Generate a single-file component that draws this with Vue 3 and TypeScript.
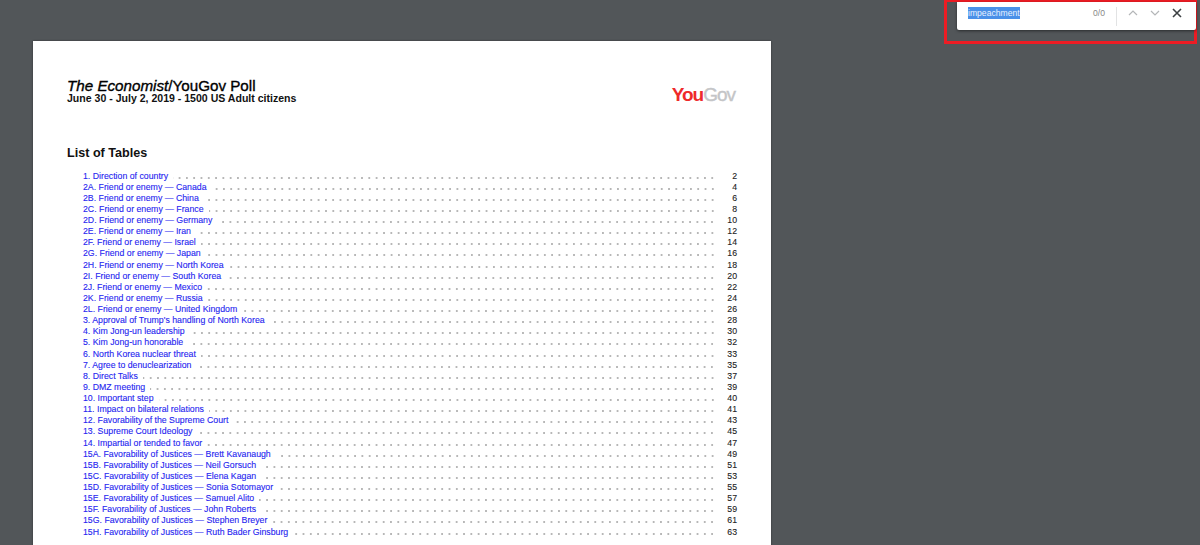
<script setup lang="ts">
const rows: [string, number][] = [
  ['1. Direction of country', 2],
  ['2A. Friend or enemy — Canada', 4],
  ['2B. Friend or enemy — China', 6],
  ['2C. Friend or enemy — France', 8],
  ['2D. Friend or enemy — Germany', 10],
  ['2E. Friend or enemy — Iran', 12],
  ['2F. Friend or enemy — Israel', 14],
  ['2G. Friend or enemy — Japan', 16],
  ['2H. Friend or enemy — North Korea', 18],
  ['2I. Friend or enemy — South Korea', 20],
  ['2J. Friend or enemy — Mexico', 22],
  ['2K. Friend or enemy — Russia', 24],
  ['2L. Friend or enemy — United Kingdom', 26],
  ["3. Approval of Trump's handling of North Korea", 28],
  ['4. Kim Jong-un leadership', 30],
  ['5. Kim Jong-un honorable', 32],
  ['6. North Korea nuclear threat', 33],
  ['7. Agree to denuclearization', 35],
  ['8. Direct Talks', 37],
  ['9. DMZ meeting', 39],
  ['10. Important step', 40],
  ['11. Impact on bilateral relations', 41],
  ['12. Favorability of the Supreme Court', 43],
  ['13. Supreme Court Ideology', 45],
  ['14. Impartial or tended to favor', 47],
  ['15A. Favorability of Justices — Brett Kavanaugh', 49],
  ['15B. Favorability of Justices — Neil Gorsuch', 51],
  ['15C. Favorability of Justices — Elena Kagan', 53],
  ['15D. Favorability of Justices — Sonia Sotomayor', 55],
  ['15E. Favorability of Justices — Samuel Alito', 57],
  ['15F. Favorability of Justices — John Roberts', 59],
  ['15G. Favorability of Justices — Stephen Breyer', 61],
  ['15H. Favorability of Justices — Ruth Bader Ginsburg', 63],
]
</script>

<template>
  <div class="viewer">
    <div class="page">
      <header class="head">
        <div>
          <h1 class="title"><i>The Economist</i>/YouGov Poll</h1>
          <p class="sub">June 30 - July 2, 2019 - 1500 US Adult citizens</p>
        </div>
        <div class="logo"><span class="you">You</span><span class="gov">Gov</span></div>
      </header>
      <h2 class="list-title">List of Tables</h2>
      <ul class="toc">
        <li v-for="r in rows" :key="r[0]" class="row">
          <span class="label">{{ r[0] }}</span>
          <span class="dots"></span>
          <span class="num">{{ r[1] }}</span>
        </li>
      </ul>
    </div>
    <div class="find-wrap">
      <div class="find">
        <span class="query"><span class="sel">impeachment</span></span>
        <span class="count">0/0</span>
        <span class="sep"></span>
        <svg class="ic" viewBox="0 0 12 12" width="12" height="12"><path d="M2 8l4-4 4 4" fill="none" stroke="#b4b6b8" stroke-width="1.2"/></svg>
        <svg class="ic" viewBox="0 0 12 12" width="12" height="12"><path d="M2 4l4 4 4-4" fill="none" stroke="#b4b6b8" stroke-width="1.2"/></svg>
        <svg class="ic close" viewBox="0 0 12 12" width="12" height="12"><path d="M2 2l8 8M10 2l-8 8" fill="none" stroke="#3c4043" stroke-width="1.6"/></svg>
      </div>
    </div>
  </div>
</template>

<style>
html, body { margin: 0; overflow: hidden; }
</style>

<style scoped>
.viewer {
  position: relative;
  height: 545px;
  overflow: hidden;
  background: #525659;
  font-family: "Liberation Sans", Arial, sans-serif;
  padding-top: 41px;
  box-sizing: border-box;
}
.page {
  margin-left: 33px;
  width: 738px;
  height: 600px;
  background: #fff;
  box-sizing: border-box;
  padding: 37px 34px 0;
  box-shadow: 0 0 2px rgba(0, 0, 0, 0.4);
}
.head { display: flex; justify-content: space-between; align-items: flex-start; }
.title { margin: 0; font-size: 15.2px; line-height: 15px; font-weight: 400; color: #000; -webkit-text-stroke: 0.35px #000; }
.sub { margin: -1px 0 0; font-size: 10.55px; line-height: 12px; font-weight: 700; color: #111; }
.logo { font-size: 19px; line-height: 24px; font-weight: 700; letter-spacing: -1px; margin: 5px 2px 0 0; }
.you { color: #ee2a2a; }
.gov { color: #c4c5c7; font-weight: 400; -webkit-text-stroke: 0.4px #c4c5c7; }
.list-title { margin: 37px 0 0; font-size: 12.6px; line-height: 18px; font-weight: 700; color: #111; }
.toc { list-style: none; margin: 8.5px 0 0; padding: 0 0 0 16px; }
.row { display: flex; align-items: baseline; height: 11.125px; font-size: 8.75px; line-height: 11.125px; }
.label { color: #2424f0; white-space: nowrap; padding-right: 5px; -webkit-text-stroke: 0.1px #2424f0; }
.dots {
  flex: 1;
  height: 2px;
  background-image: radial-gradient(circle at center, #8a8a8a 0.6px, transparent 0.8px);
  background-size: 7.3px 2px;
  background-position: right center;
  background-repeat: repeat-x;
}
.num { width: 21px; text-align: right; color: #222; -webkit-text-stroke: 0.1px #222; }
.find-wrap {
  position: absolute;
  left: 944px;
  top: 0;
  width: 253px;
  height: 44px;
  box-sizing: border-box;
  border: 3px solid #ed1c24;
  border-top-width: 2px;
}
.find {
  position: absolute;
  left: 10px;
  top: 0;
  width: 239px;
  height: 28px;
  background: #fff;
  border-radius: 0 0 2px 2px;
  box-shadow: 0 1px 3px rgba(0, 0, 0, 0.5);
  display: flex;
  align-items: flex-start;
  padding: 5px 13px 0 11px;
  box-sizing: border-box;
  font-size: 8.6px;
  line-height: 12px;
}
.query { flex: 1; }
.sel { background: #4a90e8; color: #e8f0ff; padding: 1px 0; }
.count { color: #888; margin-right: 11px; }
.sep { width: 1px; height: 19px; background: #e2e3e4; margin: 0; }
.ic { flex: none; margin-left: 10px; }
.close { margin-left: 10px; }
</style>
